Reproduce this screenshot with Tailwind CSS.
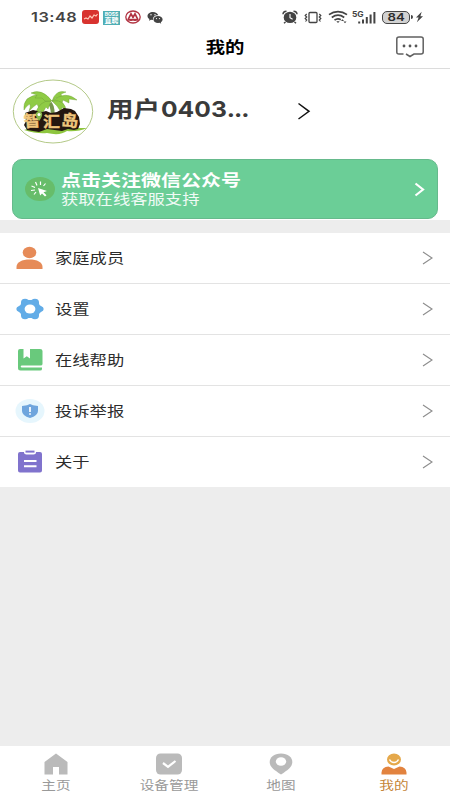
<!DOCTYPE html>
<html lang="zh-CN">
<head>
<meta charset="utf-8">
<title>我的</title>
<script src="https://cdn.jsdelivr.net/npm/@tailwindcss/browser@4"></script>
</head>
<body class="w-[450px] h-[800px] overflow-hidden bg-[#ededed] font-['Noto_Sans_CJK_SC',sans-serif] text-[#2c2c2c] flex flex-col whitespace-nowrap">

<header class="h-[69px] shrink-0 bg-white border-b border-[#dcdcdc]">
  <div class="h-[34px] flex items-center pl-[31px] pr-[27px]">
    <span class="w-[51px] font-['Inter',sans-serif] font-semibold text-[13.5px] leading-[34px] text-[#444]"><span class="inline-block origin-left scale-x-[1.21] tracking-[0.4px]">13:48</span></span>
    <svg class="w-[17px] h-[14px]" viewBox="0 0 17 14"><rect width="17" height="14" rx="3" fill="#d8332f"/><path d="M2 9l2-1 2 1 2-3 2 2 2-3 2 1 1.500-2" fill="none" stroke="#ffc9b8" stroke-width="1.200"/></svg>
    <div class="ml-[4px] mt-px w-[17px] h-[14px] bg-[#50aeb4] text-white font-bold flex flex-col items-center justify-center overflow-hidden">
      <span class="text-[5px] leading-[6px] font-['Inter',sans-serif]">BOSS</span><span class="text-[7px] leading-[7px]">直聘</span>
    </div>
    <svg class="ml-[5px] w-[16px] h-[14px]" viewBox="0 0 16 14"><ellipse cx="8" cy="7" rx="7.200" ry="6" fill="#fff" stroke="#b13342" stroke-width="1.300"/><path d="M3 9.800L6 3.800 8 7.500l2-3.700 3 6M6 11V8.800M10 11V8.800M2.500 9.800h11" fill="none" stroke="#b13342" stroke-width="1.700"/></svg>
    <svg class="ml-[6px] w-[16px] h-[13px]" viewBox="0 0 16 13"><path d="M6 1C2.800 1 .5 2.800.5 5c0 1.300.7 2.300 1.900 3L2 9.700l2-.9 2 .2C5.500 6 8 4.200 11.300 4.300 10.700 2.300 8.600 1 6 1z" fill="#444"/><path d="M11 5c-2.600 0-4.500 1.500-4.500 3.500S8.400 12 11 12l1.500-.2 1.700.9-.4-1.500c1.100-.7 1.800-1.600 1.800-2.700C15.600 6.500 13.500 5 11 5z" fill="#444"/><g fill="#fff"><circle cx="4" cy="3.800" r=".7"/><circle cx="8" cy="3.800" r=".7"/><circle cx="9.500" cy="7.600" r=".6"/><circle cx="12.500" cy="7.600" r=".6"/></g></svg>
    <div class="ml-auto flex items-center">
      <svg class="w-[16px] h-[14px]" viewBox="0 0 16 14"><g fill="none" stroke="#444" stroke-width="1.500"><path d="M1 4.300C1 2.500 2.500 1.300 4.500 1.200M11.500 1.200c2 .1 3.500 1.300 3.500 3.100M3.500 12L2 13.300M12.500 12l1.500 1.300"/></g><ellipse cx="8" cy="7.400" rx="6.300" ry="5.700" fill="#444"/><path d="M8 4v3.800l2.600 1.500" fill="none" stroke="#fff" stroke-width="1.100"/></svg>
      <svg class="ml-[6px] w-[18px] h-[13px]" viewBox="0 0 18 13"><g fill="none" stroke="#444" stroke-width="1.300"><rect x="5" y="1.500" width="8" height="10" rx="1"/><path d="M2.700 3L1.200 4.500 2.700 6 1.200 7.500 2.700 9 1.500 10.500M15.300 3l1.500 1.500L15.300 6l1.500 1.500L15.300 9l1.200 1.500" stroke-width="1.200"/></g></svg>
      <svg class="ml-[6px] w-[20px] h-[14px]" viewBox="0 0 20 14"><g fill="none" stroke="#444" stroke-width="1.700"><path d="M1 4.600C6.500.5 13.500.5 19 4.600M3.800 7.500c3.800-2.800 8.600-2.800 12.400 0M6.500 10.200c2-1.600 4.500-1.700 6.300-.4"/></g><path d="M8.300 11.200h3.400L10 13zM13 11l1.500-1.700L16 11zM15.500 11.500h3L17 13.200z" fill="#444"/></svg>
      <span class="ml-[4px] w-[11px] -mt-[6px] text-[8px] leading-[9px] font-bold font-['Inter',sans-serif] text-[#444]"><span class="inline-block origin-left scale-x-[1.050]">5G</span></span>
      <svg class="-ml-[5px] w-[18px] h-[13px]" viewBox="0 0 18 13"><path d="M1.200 12.500v-2M5 12.500V8.500M8.800 12.500V6M12.600 12.500V3.500M16.400 12.500V1" stroke="#444" stroke-width="2"/></svg>
      <span class="ml-[6px] w-[28px] h-[13px] rounded-[5px] border-[1.500px] border-[#444] bg-[#d2d2d2] flex items-center justify-center font-['Inter',sans-serif] font-semibold text-[11px] leading-none"><span class="scale-x-[1.200]">84</span></span>
      <span class="w-[2px] h-[4px] ml-px bg-[#444] rounded-r"></span>
      <svg class="ml-[3px] w-[7px] h-[12px]" viewBox="0 0 8 12"><path d="M6.500 0L0 6.500h3L1 12l7-7H5z" fill="#444"/></svg>
    </div>
  </div>
  <div class="h-[34px] grid grid-cols-[1fr_auto_1fr] items-start">
    <span></span>
    <h1 class="text-[16px] leading-[24px] font-bold text-black"><span class="inline-block scale-x-[1.210]">我的</span></h1>
    <svg class="justify-self-end mr-[25px] mt-[1px] w-[30px] h-[23px]" viewBox="0 0 30 23"><path d="M8.500 19H4Q1.800 19 1.800 17V4Q1.800 2 4 2H26Q28.200 2 28.200 4V17Q28.200 19 26 19H19L15 21.500L11 19" fill="none" stroke="#606060" stroke-width="1.500"/><g fill="#555"><circle cx="9" cy="11" r="1.400"/><circle cx="15" cy="11" r="1.400"/><circle cx="21" cy="11" r="1.400"/></g></svg>
  </div>
</header>

<section class="h-[151px] shrink-0 bg-white">
  <div class="h-[90px] flex items-start pl-[12px] pt-[10px]">
    <svg class="w-[82px] h-[65px]" viewBox="0 0 82 65">
      <ellipse cx="41" cy="32.500" rx="39.700" ry="31.500" fill="#fff" stroke="#b3c987"/>
      <path d="M12 51Q30 45 46 47T75 49Q66 53 55 52 48 57 35 54 25 55 12 51z" fill="#8ec63f"/>
      <path d="M38 24q4 6 2 17" stroke="#76974e" stroke-width="4" fill="none"/>
      <g fill="#8fcb45" stroke="#6a9d35" stroke-width=".4">
        <path d="M39 22Q27 11 15 20 11 25 12 31q3-5 6-6 1 3-1 7 5-5 8-7l2 4 6-6z"/>
        <path d="M39 22Q27 21 23 36q4-4 5-5l2 4 4-7 2 2z"/>
        <path d="M40 22Q30 9 19 14l6 2-2 3 7 0 3 3z"/>
        <path d="M40 22Q44 10 54 13l-5 2 1 3-6 1z"/>
        <path d="M40 22Q54 11 65 21l-8-1 0 4-6-3-1 3-5-2z"/>
        <path d="M40 22Q54 20 54 33l-4-5-1 5-4-6z"/>
      </g>
      <path d="M13 34l8-3 9 2 4-1 5 2 6-1 7-4 7 1 4 2 4 6 1 7-2 5-4 1-6-1-6 2-15-2-8 3-12-2-3-5 2-4z" fill="#241710"/>
      <g font-family="'Noto Sans CJK SC',sans-serif" font-weight="700" fill="#f0c67c" stroke="#f0c67c" stroke-width=".4" font-size="16"><text transform="translate(12 48) rotate(-3) scale(1.060 1)">智</text><text transform="translate(31 48) scale(1.060 .94)">汇</text><text transform="translate(49 47) rotate(3) scale(1.060 1)">岛</text></g>
      <path d="M27 42q-4-5-3-8 3-4 6 0 1 3-3 8z" fill="#86b849"/><circle cx="27" cy="35.500" r="1.500" fill="#fff"/>
    </svg>
    <div class="ml-[13px] mt-[13px] w-[190px] flex items-baseline text-[21.500px] leading-[32px] font-bold text-[#3a3a3a]"><span class="inline-block origin-left scale-x-[1.230] w-[54px]">用户</span><span class="inline-block origin-left scale-x-[1.120] font-['Inter',sans-serif] text-[22px]">0403<span class="tracking-[-0.900px]">...</span></span></div>
    <svg class="mt-[23px] w-[14px] h-[18px]" viewBox="0 0 14 18"><path d="M1.500 1.500L12 9.300 1.500 17" fill="none" stroke="#111" stroke-width="1.500"/></svg>
  </div>
  <div class="mx-[12px] h-[60px] rounded-[10px] bg-[#6bce97] border border-[#66ba8c] text-white flex items-center pl-[12px] pr-[12px]">
    <svg class="w-[30px] h-[24px]" viewBox="0 0 30 24"><ellipse cx="15" cy="12" rx="15" ry="12" fill="#67bd6a"/><path d="M13 11l9 3-3.500 1.200 3 3-1.500 1.200-3-3-1.800 2z" fill="#fff"/><path d="M12 8.500L10.500 5M15.500 8V4.500M18.500 9l2-2.500M10 10.500L6.500 9M10 13l-4 .5M11 15l-2 2.500" stroke="#fff" stroke-width="1.200"/></svg>
    <div class="ml-[6px] -mt-px">
      <div class="text-[16.400px] leading-[20px] font-bold"><span class="inline-block origin-left scale-x-[1.220]">点击关注微信公众号</span></div>
      <div class="text-[14.200px] leading-[19px]"><span class="inline-block origin-left scale-x-[1.220] text-white/90">获取在线客服支持</span></div>
    </div>
    <svg class="ml-auto w-[11px] h-[15px]" viewBox="0 0 11 15"><path d="M1.500 1.500L9 7.500 1.500 13.500" fill="none" stroke="#fff" stroke-width="2.200"/></svg>
  </div>
</section>

<main class="mt-[13px] shrink-0 bg-white divide-y divide-[#e3e3e3] text-[14.200px] leading-[20px]">
  <div class="h-[51px] flex items-center pl-[16px] pr-[17px]">
    <svg class="w-[27px] h-[24px]" viewBox="0 0 27 24"><ellipse cx="13.500" cy="6.500" rx="6.800" ry="5.800" fill="#e68b58"/><path d="M.5 23v-2C.5 16 6 13.500 13.500 13.500S26.500 16 26.500 21v2z" fill="#e68b58"/></svg>
    <span class="ml-[12px] -mt-[2px] origin-left scale-x-[1.220]">家庭成员</span>
    <svg class="ml-auto w-[11px] h-[14px]" viewBox="0 0 11 14"><path d="M1 1l9 6-9 6" fill="none" stroke="#8c8c8c" stroke-width="1.100"/></svg>
  </div>
  <div class="h-[51px] flex items-center pl-[16px] pr-[17px]">
    <svg class="w-[28px] h-[22px]" viewBox="0 0 28 22"><path d="M5 4Q5.500.8 9 .8q2 0 3.500 1.200h3Q17 .8 19 .8q3.500 0 4 3.200v1.500Q23 7 25 8q2.700 1 2.700 3T25 14q-2 1-2 2.500V18q-.5 3.200-4 3.200-2 0-3.500-1.200h-3Q11 21.200 9 21.200 5.500 21.200 5 18v-1.500Q5 15 3 14 .3 13 .3 11T3 8q2-1 2-2.500z" fill="#62ace7"/><ellipse cx="14" cy="11" rx="5.400" ry="4.500" fill="#fff"/></svg>
    <span class="ml-[11px] -mt-[3px] origin-left scale-x-[1.220]">设置</span>
    <svg class="ml-auto w-[11px] h-[14px]" viewBox="0 0 11 14"><path d="M1 1l9 6-9 6" fill="none" stroke="#8c8c8c" stroke-width="1.100"/></svg>
  </div>
  <div class="h-[51px] flex items-center pl-[17px] pr-[17px]">
    <svg class="-mt-px w-[26px] h-[23px]" viewBox="0 0 26 23"><path d="M3 1h3.500v9.500l3.300-2.300 3.200 2.300V1H23q2.500 0 2.500 2v13q0 1.500-2 1.500H5q-1.300 0-1.300 1T5 19.600h20v1.400q0 1.500-2 1.500H3.500q-2.500 0-2.500-2.500V3q0-2 2-2z" fill="#69c97c"/></svg>
    <span class="ml-[12px] -mt-[3px] origin-left scale-x-[1.220]">在线帮助</span>
    <svg class="ml-auto w-[11px] h-[14px]" viewBox="0 0 11 14"><path d="M1 1l9 6-9 6" fill="none" stroke="#8c8c8c" stroke-width="1.100"/></svg>
  </div>
  <div class="h-[51px] flex items-center pl-[15px] pr-[17px]">
    <svg class="w-[30px] h-[26px]" viewBox="0 0 30 26"><ellipse cx="15" cy="13" rx="14.500" ry="12" fill="#e6f6fd"/><path d="M15 6l3 1.200 5 .8v5q0 4.500-8 7-8-2.500-8-7V8l5-.8z" fill="#6ea5dd"/><path d="M15 9v5M15 15.300v1.400" stroke="#fff" stroke-width="1.700"/></svg>
    <span class="ml-[10px] -mt-[3px] origin-left scale-x-[1.220]">投诉举报</span>
    <svg class="ml-auto w-[11px] h-[14px]" viewBox="0 0 11 14"><path d="M1 1l9 6-9 6" fill="none" stroke="#8c8c8c" stroke-width="1.100"/></svg>
  </div>
  <div class="h-[50px] flex items-center pl-[17px] pr-[17px]">
    <svg class="-mt-px w-[26px] h-[23px]" viewBox="0 0 26 23"><path d="M3 2h4v.5Q7 4.500 9.500 4.500h7Q19 4.500 19 2.500V2h4q2 0 2 2v16.500q0 2-2 2H3q-2 0-2-2V4q0-2 2-2z" fill="#8073cd"/><path d="M8.500 1.600h9" stroke="#8073cd" stroke-width="2"/><path d="M7 11h12.500M7 16.300h12.500" stroke="#fff" stroke-width="2"/></svg>
    <span class="ml-[12px] -mt-[3px] origin-left scale-x-[1.220]">关于</span>
    <svg class="ml-auto w-[11px] h-[14px]" viewBox="0 0 11 14"><path d="M1 1l9 6-9 6" fill="none" stroke="#8c8c8c" stroke-width="1.100"/></svg>
  </div>
</main>

<nav class="mt-auto h-[54px] shrink-0 bg-white grid grid-cols-4 text-[12px] leading-[18px] text-[#999]">
  <div class="flex flex-col items-center pt-[7px]">
    <svg class="w-[24px] h-[22px]" viewBox="0 0 24 22"><path d="M12 .5L23.500 9v12.500H15V14H9v7.500H.5V9z" fill="#bababa"/></svg>
    <span class="mt-px scale-x-[1.220]">主页</span>
  </div>
  <div class="flex flex-col items-center pt-[7px]">
    <svg class="w-[26px] h-[22px]" viewBox="0 0 26 22"><rect y=".5" width="26" height="21" rx="4.500" fill="#bababa"/><path d="M7 10l5 3.800L19.500 8" fill="none" stroke="#fff" stroke-width="2.200"/></svg>
    <span class="mt-px scale-x-[1.220]">设备管理</span>
  </div>
  <div class="flex flex-col items-center pt-[7px]">
    <svg class="w-[24px] h-[22px]" viewBox="0 0 24 22"><path d="M12 .5C5 .5.7 4.300.7 9c0 5 4.500 8 11.300 12.500C18.800 17 23.300 14 23.300 9 23.300 4.300 19 .5 12 .5z" fill="#bababa"/><ellipse cx="12" cy="8.500" rx="5.200" ry="4.300" fill="#fff"/></svg>
    <span class="mt-px scale-x-[1.220]">地图</span>
  </div>
  <div class="flex flex-col items-center pt-[7px] text-[#c58538]">
    <svg class="w-[26px] h-[22px]" viewBox="0 0 26 22"><ellipse cx="13" cy="6.500" rx="7" ry="6" fill="#e5a84a"/><path d="M8.500 6.500Q10 9.500 13 9.500t4.500-3" fill="none" stroke="#fff" stroke-width="1.400"/><path d="M.5 21.500v-2Q1 14 7.500 13.500L13 16l5.500-2.500Q25 14 25.500 19.500v2z" fill="#e2833f"/></svg>
    <span class="mt-px scale-x-[1.220]">我的</span>
  </div>
</nav>
</body>
</html>
